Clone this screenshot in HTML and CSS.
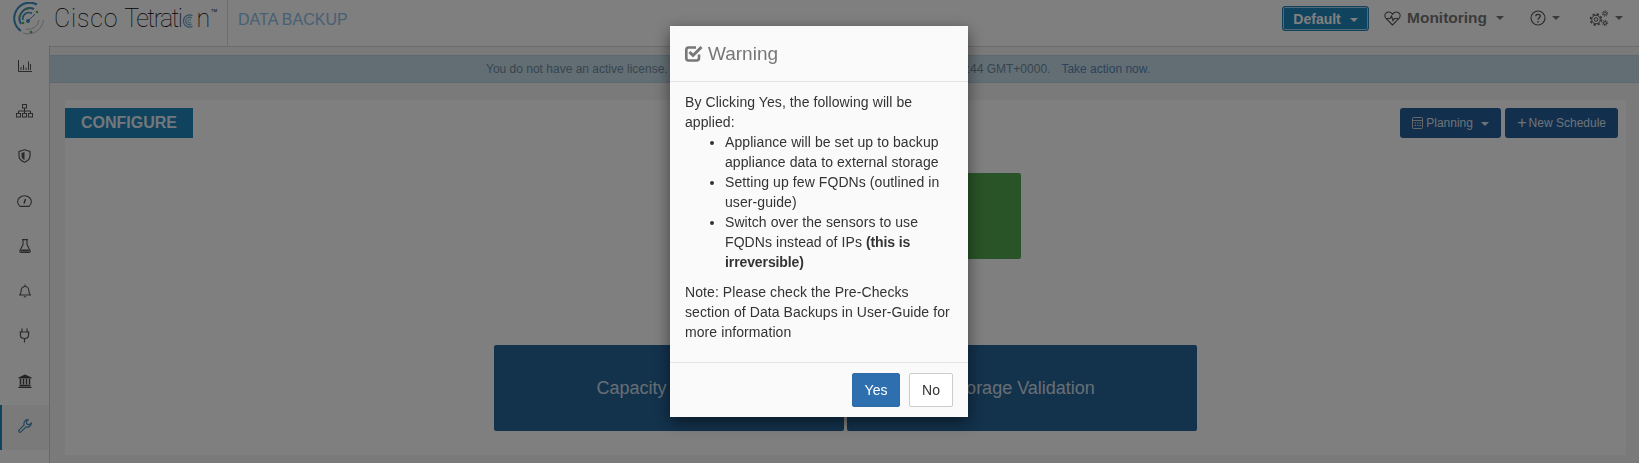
FILE: index.html
```html
<!DOCTYPE html>
<html lang="en">

<head>
    <meta charset="UTF-8">
    <meta name="viewport" content="width=device-width, initial-scale=1.0">
    <title>Data Backup</title>
    <link rel="stylesheet" href="styles.css">
</head>

<body>
    <header class="topbar">
        <div class="brand">
            <svg class="brand-logo" width="34" height="34" viewBox="0 0 34 34" fill="none">
                <path d="M25 2.500A15.500 15.500 0 0 0 9 29" stroke="#3f8fc4" stroke-width="2"/>
                <path d="M22 7A10.500 10.500 0 0 0 9 22" stroke="#3f8fc4" stroke-width="2"/>
                <path d="M20 11.500A6 6 0 0 0 11 18" stroke="#3f8fc4" stroke-width="1.600"/>
                <path d="M31.500 18A15.500 15.500 0 0 1 11 31" stroke="#aaa" stroke-width="0.800"/>
                <path d="M27 18A10.500 10.500 0 0 1 14 27" stroke="#aaa" stroke-width="0.800"/>
                <path d="M23 12L16 19" stroke="#3f8fc4" stroke-width="1"/>
                <circle cx="16" cy="19" r="2" fill="#3f8fc4"/>
                <circle cx="15" cy="7" r="1.300" fill="#5bb55b"/>
                <circle cx="8" cy="14" r="1.300" fill="#5bb55b"/>
                <circle cx="11" cy="21" r="1.300" fill="#5bb55b"/>
                <circle cx="19" cy="30" r="1.300" fill="#5bb55b"/>
                <circle cx="25" cy="10" r="1.300" fill="#5bb55b"/>
            </svg>
            <div class="brand-name"><span class="brand-cisco">Cisco</span> <span class="brand-tetra">Tetrati</span><svg class="brand-o" width="13" height="14" viewBox="0 0 16 17" fill="none">
                    <path d="M13 2A7.500 7.500 0 1 0 13 15" stroke="#5f9fc0" stroke-width="1.300"/>
                    <path d="M12 5A4.500 4.500 0 1 0 12 12" stroke="#5f9fc0" stroke-width="1.300"/>
                    <path d="M11 7.500A2 2 0 1 0 11 10" stroke="#5f9fc0" stroke-width="1.200"/>
                </svg><span class="brand-n">n</span><span class="brand-tm">TM</span></div>
        </div>
        <div class="page-title">DATA BACKUP</div>
        <nav class="topnav">
            <button class="btn-default-scope">Default <span class="caret"></span></button>
            <div class="topnav-item topnav-monitoring">
                <svg width="17" height="15" viewBox="0 0 17 15" fill="none" stroke="#555" stroke-width="1.100">
                    <path d="M8.500 14L2 7.500C-.5 4.500 1.500 1 4.500 1C6.500 1 7.800 2 8.500 3.200C9.200 2 10.500 1 12.500 1C15.500 1 17.500 4.500 15 7.500Z"/>
                    <path d="M2.500 7.500H6L7.500 5L9 9.500L10.500 7.500H14.500"/>
                </svg>
                <span class="monitoring-label">Monitoring</span>
                <span class="caret"></span>
            </div>
            <div class="topnav-item topnav-help">
                <svg width="16" height="16" viewBox="0 0 16 16" fill="none" stroke="#555" stroke-width="1.100">
                    <circle cx="8" cy="8" r="7"/>
                    <path d="M5.800 6.200C5.800 3.800 10.300 3.800 10.300 6.200C10.300 7.800 8 7.800 8 9.800" stroke-width="1.300"/>
                    <path d="M8 11V12.500" stroke-width="1.400"/>
                </svg>
                <span class="caret"></span>
            </div>
            <div class="topnav-item topnav-gears">
                <svg width="20" height="17" viewBox="0 0 20 17" fill="none" stroke="#555">
                    <circle cx="7" cy="9.500" r="4.300" stroke-width="1"/>
                    <circle cx="7" cy="9.500" r="5.500" stroke-width="1.500" stroke-dasharray="2.200 2.120"/>
                    <circle cx="7" cy="9.500" r="1.800" stroke-width="1"/>
                    <circle cx="16" cy="3.500" r="1.500" stroke-width="1"/>
                    <circle cx="16" cy="3.500" r="2.700" stroke-width="1" stroke-dasharray="1 1.120"/>
                    <circle cx="16" cy="13" r="1.500" stroke-width="1"/>
                    <circle cx="16" cy="13" r="2.700" stroke-width="1" stroke-dasharray="1 1.120"/>
                </svg>
                <span class="caret"></span>
            </div>
        </nav>
    </header>

    <div class="layout">
        <aside class="sidebar">
            <div class="side-item">
                <svg width="14" height="12" viewBox="0 0 14 12" fill="none" stroke="#555">
                    <path d="M.5 0V11.500H14" />
                    <path d="M3 10V7M5.500 10V5M8 10V7.500M10.500 10V1.500M12.500 10V4" />
                </svg>
            </div>
            <div class="side-item">
                <svg width="17" height="14" viewBox="0 0 17 14" fill="none" stroke="#555">
                    <rect x="6.500" y=".5" width="4" height="3.500"/>
                    <rect x=".5" y="9.500" width="4" height="3.500"/>
                    <rect x="6.500" y="9.500" width="4" height="3.500"/>
                    <rect x="12.500" y="9.500" width="4" height="3.500"/>
                    <path d="M8.500 4V9.500M2.500 9.500V7H14.500V9.500"/>
                </svg>
            </div>
            <div class="side-item">
                <svg width="13" height="14" viewBox="0 0 13 14" fill="none" stroke="#555" stroke-width="1.200">
                    <path d="M6.500 .8L12 2.500V7C12 10 9.500 12 6.500 13.200C3.500 12 1 10 1 7V2.500Z"/>
                    <path d="M6.500 3V11C4.500 10 3.500 8.500 3.500 7V4Z" fill="#555" stroke="none"/>
                </svg>
            </div>
            <div class="side-item">
                <svg width="15" height="12" viewBox="0 0 15 12" fill="none" stroke="#555" stroke-width="1.100">
                    <path d="M3 11.400H12C13.500 10 14.400 8.500 14.400 6.800A6.900 6.100 0 0 0 .6 6.800C.6 8.500 1.500 10 3 11.400Z"/>
                    <path d="M7 8.500L8.500 4" stroke-width="1.500"/>
                </svg>
            </div>
            <div class="side-item">
                <svg width="12" height="14" viewBox="0 0 12 14" fill="none" stroke="#555" stroke-width="1.100">
                    <path d="M3 .6H9M4 .6V5.500L.8 12C.6 12.800 1 13.400 2 13.400H10C11 13.400 11.400 12.800 11.200 12L8 5.500V.6"/>
                    <path d="M2.500 10.500H9.500L10.500 12.500H1.500Z" fill="#555" stroke="none"/>
                </svg>
            </div>
            <div class="side-item">
                <svg width="12" height="14" viewBox="0 0 12 14" fill="none" stroke="#555" stroke-width="1.100">
                    <path d="M.6 11H11.400C10 9.500 9.800 8.500 9.800 6.500C9.800 4 8.200 2.500 6 2.500C3.800 2.500 2.200 4 2.200 6.500C2.200 8.500 2 9.500 .6 11Z"/>
                    <path d="M6 .5V2.500M4.800 12.800H7.200"/>
                </svg>
            </div>
            <div class="side-item">
                <svg width="11" height="15" viewBox="0 0 11 15" fill="none" stroke="#555" stroke-width="1.200">
                    <path d="M3 .5V4M8 .5V4M.5 4H10.500M1.500 4V7.500C1.500 9.500 3.500 10.500 5.500 10.500C7.500 10.500 9.500 9.500 9.500 7.500V4M5.500 10.500V14.500"/>
                </svg>
            </div>
            <div class="side-item">
                <svg width="14" height="14" viewBox="0 0 14 14" fill="none" stroke="#444">
                    <path d="M7 .6L13.500 3.500V4.500H.5V3.500Z" fill="#444" stroke="none"/>
                    <path d="M2.500 5V10.500M5.500 5V10.500M8.500 5V10.500M11.500 5V10.500" stroke-width="1.500"/>
                    <path d="M1.500 11.500H12.500M.5 13.300H13.500" stroke-width="1.300"/>
                </svg>
            </div>
            <div class="side-item side-item-active">
                <svg width="14" height="14" viewBox="0 0 14 14" fill="none" stroke="#3a86b8" stroke-width="1.100">
                    <path d="M.8 11.300L6.200 5.900C5.500 3.500 6.500 .8 10 .6L8.200 3L9 5L11 5.800L13.400 4C13.300 7.500 10.500 8.700 8.100 7.800L2.700 13.200C2 13.800 .2 12.100 .8 11.300Z"/>
                </svg>
            </div>
        </aside>

        <main class="content">
            <div class="banner">
                <span>You do not have an active license.</span>
                <span class="banner-date">:44 GMT+0000.</span>
                <span class="banner-action">Take action now.</span>
            </div>

            <section class="panel">
                <div class="panel-head">
                    <div class="panel-tab">CONFIGURE</div>
                    <div class="panel-actions">
                        <button class="btn-action">
                            <svg width="11" height="12" viewBox="0 0 11 12" fill="none" stroke="#ddd" stroke-width=".9">
                                <rect x=".5" y=".5" width="10" height="11" rx="1"/>
                                <path d="M.5 3.500H10.500"/>
                                <path d="M2.500 6H4M5 6H6.500M7.500 6H9M2.500 8.500H4M5 8.500H6.500M7.500 8.500H9" stroke-width="1.100"/>
                            </svg>
                            Planning <span class="caret"></span>
                        </button>
                        <button class="btn-action"><span class="btn-plus">+</span>New Schedule</button>
                    </div>
                </div>
                <div class="status-box"></div>
                <div class="check-row">
                    <div class="check-box">Capacity Planning</div>
                    <div class="check-box">Storage Validation</div>
                </div>
            </section>
        </main>
    </div>

    <div class="backdrop">
        <div class="modal">
            <div class="modal-head">
                <svg width="18" height="17" viewBox="0 0 18 17" fill="none" stroke="#777" stroke-width="2.600">
                    <path d="M14 9.500V13C14 14.500 13 15.500 11.500 15.500H3.500C2 15.500 1.300 14.500 1.300 13V5C1.300 3.500 2 2.500 3.500 2.500H11"/>
                    <path d="M4.500 7L8 10.500L16.500 2" stroke-width="3"/>
                </svg>
                <span>Warning</span>
            </div>
            <div class="modal-body">
                By Clicking Yes, the following will be applied:
                <ul>
                    <li>Appliance will be set up to backup appliance data to external storage</li>
                    <li>Setting up few FQDNs (outlined in user-guide)</li>
                    <li>Switch over the sensors to use FQDNs instead of IPs <b>(this is irreversible)</b></li>
                </ul>
                <p>Note: Please check the Pre-Checks section of Data Backups in User-Guide for more information</p>
            </div>
            <div class="modal-foot">
                <button class="btn-yes">Yes</button>
                <button class="btn-no">No</button>
            </div>
        </div>
    </div>
</body>

</html>
```

FILE: styles.css
```css
body {
    margin: 0;
    height: 463px;
    overflow: hidden;
    background-color: #f4f4f4;
    font-family: "Liberation Sans", Arial, sans-serif;
    font-size: 14px;
    color: #333;
}

button {
    font-family: inherit;
    cursor: pointer;
}

.caret {
    display: inline-block;
    width: 0;
    height: 0;
    margin-left: 5px;
    vertical-align: middle;
    border-top: 4px solid currentColor;
    border-left: 4px solid transparent;
    border-right: 4px solid transparent;
}

/* ------------------Top bar------------------- */
.topbar {
    display: flex;
    height: 46px;
    border-bottom: 1px solid #d8d8d8;
    background-color: #fff;
}

.brand {
    display: flex;
    align-items: flex-start;
    width: 228px;
    padding-left: 12px;
    box-sizing: border-box;
    border-right: 1px solid #ddd;
}

.brand-logo {
    margin-top: 2px;
    flex: none;
}

.brand-name {
    margin: 4px 0 0 8px;
    font-family: Roboto, sans-serif;
    font-weight: 100;
    font-size: 25px;
    line-height: 30px;
    white-space: nowrap;
    color: #000;
}

.brand-cisco {
    letter-spacing: 0.8px;
}

.brand-tetra {
    letter-spacing: -1.600px;
}

.brand-o {
    vertical-align: -1px;
    margin-left: 1px;
}

.brand-n {
    letter-spacing: -1px;
    margin-left: 1px;
}

.brand-tm {
    font-size: 4px;
    line-height: 4px;
    margin-left: 2px;
    vertical-align: 15px;
    font-weight: 400;
}

.page-title {
    margin: 11px 0 0 10px;
    font-size: 16px;
    line-height: 18px;
    color: #8fc0ea;
}

.topnav {
    display: flex;
    align-items: flex-start;
    margin-left: auto;
}

.btn-default-scope {
    height: 25px;
    width: 87px;
    margin-top: 6px;
    padding: 0;
    border: 1px solid #2082ba;
    border-radius: 3px;
    box-shadow: inset 0 0 0 1px #a5d4ee;
    background-color: #1f86bc;
    color: #fff;
    font-size: 14px;
    font-weight: 700;
}

.topnav-item {
    display: flex;
    align-items: center;
    height: 18px;
    margin-top: 9px;
    color: #777;
}

.topnav-monitoring {
    margin-left: 15px;
    width: 146px;
}

.monitoring-label {
    margin: 0 6px;
    font-size: 15.500px;
    font-weight: 700;
}

.topnav-monitoring .caret {
    margin-left: 3px;
}

.topnav-help {
    width: 59px;
}

.topnav-gears {
    width: 50px;
}

.topnav-gears .caret,
.topnav-help .caret {
    margin-left: 6px;
}

/* ------------------Sidebar------------------- */
.layout {
    display: flex;
    height: 416px;
}

.sidebar {
    flex: none;
    width: 49px;
    margin-top: -2px;
    border-right: 1px solid #d0d0d0;
    background-color: #fff;
    position: relative;
}

.side-item {
    display: flex;
    justify-content: center;
    align-items: center;
    height: 41px;
    padding-bottom: 4px;
}

.side-item-active {
    background-color: #f4f4f4;
    box-shadow: inset 2px 0 0 #1f86bc;
}

/* ------------------Main content------------------- */
.content {
    flex: 1;
    min-width: 0;
}

.banner {
    display: flex;
    align-items: center;
    height: 28px;
    margin-top: 8px;
    padding-left: 436px;
    background-color: #c6dde9;
    border-top: 1px solid #b8d2e2;
    border-bottom: 1px solid #b8d2e2;
    box-sizing: border-box;
    font-size: 12px;
    color: #6f8ba0;
}

.banner-date {
    margin-left: 299px;
}

.banner-action {
    margin-left: 11px;
    color: #5a86b8;
}

.panel {
    height: 355px;
    box-sizing: border-box;
    margin: 17px 13px 0 15px;
    padding-top: 8px;
    background-color: #fff;
}

.panel-head {
    display: flex;
    justify-content: space-between;
    padding-right: 8px;
}

.panel-tab {
    width: 128px;
    height: 30px;
    line-height: 30px;
    text-align: center;
    background-color: #1f86bc;
    color: rgba(255, 255, 255, 0.9);
    font-size: 16px;
    font-weight: 700;
}

.panel-actions {
    display: flex;
    gap: 4px;
}

.btn-action {
    height: 30px;
    padding: 0 12px;
    border: 0;
    border-radius: 3px;
    background-color: #24609c;
    color: rgba(255, 255, 255, 0.85);
    font-size: 12px;
}

.btn-action svg {
    vertical-align: -2px;
}

.btn-plus {
    font-size: 16px;
    line-height: 12px;
    vertical-align: -1px;
    margin-right: 2px;
}

.status-box {
    width: 351px;
    height: 86px;
    margin: 35px auto 0;
    border-radius: 2px;
    background-color: #52a84e;
}

.check-row {
    display: flex;
    justify-content: center;
    gap: 3px;
    margin-top: 86px;
}

.check-box {
    width: 350px;
    height: 86px;
    line-height: 86px;
    text-align: center;
    border-radius: 2px;
    background-color: #266499;
    color: rgba(255, 255, 255, 0.8);
    font-size: 18px;
}

/* ------------------Modal------------------- */
.backdrop {
    position: fixed;
    top: 0;
    left: 0;
    right: 0;
    bottom: 0;
    display: flex;
    justify-content: center;
    align-items: flex-start;
    background-color: rgba(0, 0, 0, 0.5);
}

.modal {
    width: 298px;
    margin: 26px 1px 0 0;
    background-color: #fafafa;
    box-shadow: 0 5px 15px rgba(0, 0, 0, 0.5);
}

.modal-head {
    display: flex;
    align-items: center;
    gap: 5px;
    height: 55px;
    padding-left: 15px;
    border-bottom: 1px solid #e5e5e5;
    color: #777;
    font-size: 19px;
}

.modal-body {
    padding: 10px 15px 20px;
    line-height: 20px;
    letter-spacing: 0.08px;
}

.modal-body b {
    letter-spacing: -0.1px;
}

.modal-body ul {
    margin: 0 0 10px;
    padding-left: 40px;
}

.modal-body p {
    margin: 0;
}

.modal-foot {
    display: flex;
    justify-content: flex-end;
    gap: 9px;
    padding: 10px 15px;
    border-top: 1px solid #e5e5e5;
}

.btn-yes,
.btn-no {
    height: 34px;
    border-radius: 2px;
    font-size: 14px;
}

.btn-yes {
    width: 48px;
    border: 1px solid #2e6da4;
    background-color: #2e6fb0;
    color: #fff;
}

.btn-no {
    width: 44px;
    border: 1px solid #ccc;
    background-color: #fff;
    color: #333;
}
```
